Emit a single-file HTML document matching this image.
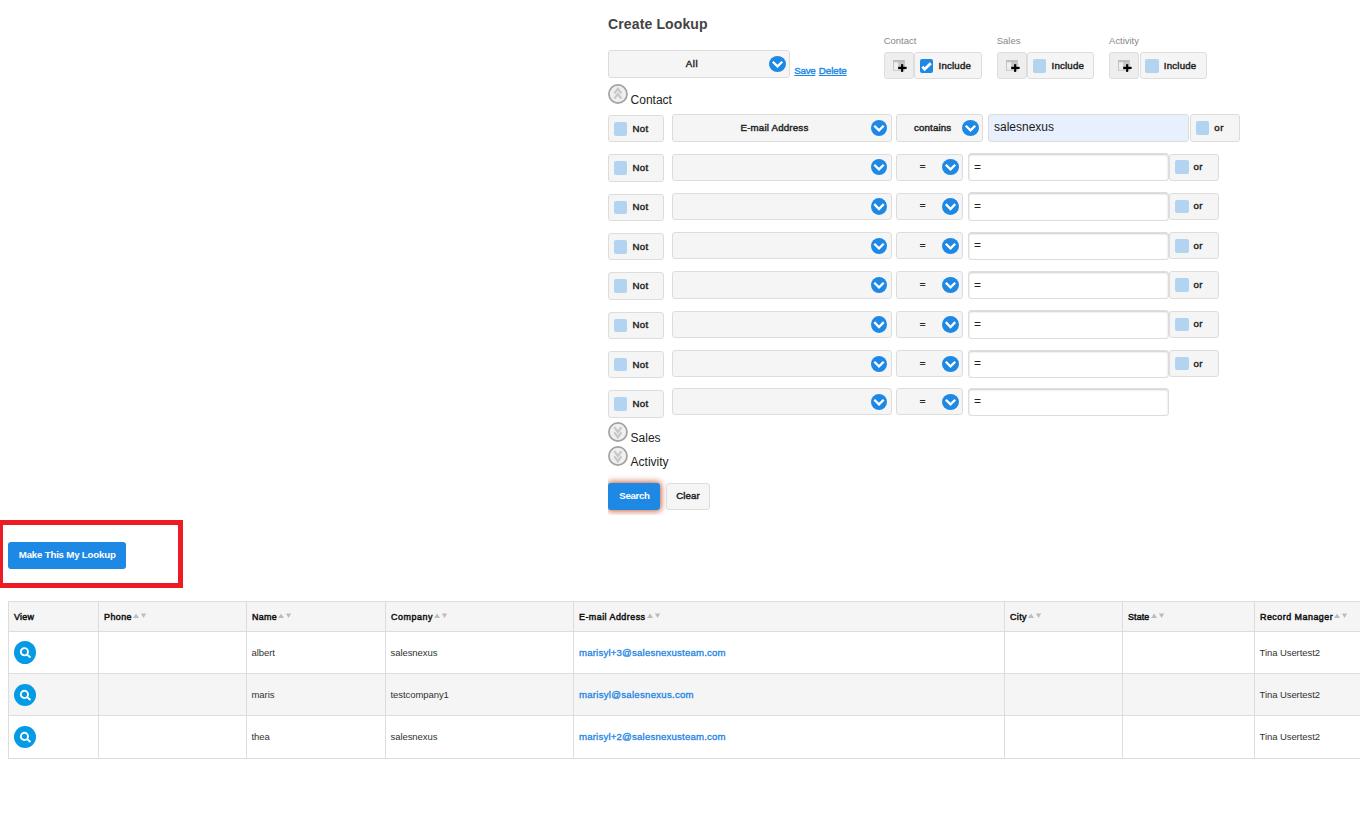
<!DOCTYPE html>
<html><head><meta charset="utf-8"><title>Create Lookup</title>
<style>
html,body{margin:0;padding:0;background:#fff;}
body{width:1360px;height:819px;position:relative;overflow:hidden;font-family:"Liberation Sans",sans-serif;color:#222;}
.a{position:absolute;box-sizing:border-box;white-space:nowrap;}
.box{background:#f5f5f5;border:1px solid #ddd;border-radius:3px;}
.t{position:absolute;white-space:nowrap;line-height:12px;font-size:9.7px;}
.b{font-weight:normal;color:#222;-webkit-text-stroke:.42px #222;}
.arr{position:absolute;border-radius:50%;background:#1e88e5;}
.arr svg{position:absolute;left:0;top:0;display:block;}
.cb{position:absolute;border-radius:2px;background:#b3d4f1;}
.cb.on{background:#1e88e5;}
.inp{background:#fff;border:1px solid #ddd;border-radius:3px;box-shadow:inset 0 1px 2px rgba(0,0,0,.2);}
.circ svg{position:absolute;left:0;top:0;display:block;}
.sec{font-size:12px;color:#222;line-height:14px;}
.glab{font-size:9.5px;color:#888;}
.lnk{font-size:9.8px;color:#1e88e5;text-decoration:underline;-webkit-text-stroke:.4px #1e88e5;}
.btnb{background:#1e88e5;border-radius:3px;}
.w{color:#fff;font-weight:bold;}
.th{font-weight:normal;color:#111;-webkit-text-stroke:.5px #111;}
.td{font-size:9.5px;color:#333;letter-spacing:-.07px;}
.em{font-size:9.6px;color:#2083e3;letter-spacing:.2px;-webkit-text-stroke:.3px #2083e3;}
.ln{position:absolute;background:#ddd;}
.vi{border-radius:50%;background:#039be5;}
.vi svg{position:absolute;left:0;top:0;display:block;}
</style></head><body>
<div class="a" style="left:608px;top:15px;font-size:14px;font-weight:bold;color:#444;line-height:18px;letter-spacing:.13px;">Create Lookup</div>
<div class="a box" style="left:608px;top:50px;width:182px;height:28px;"><span class="t b" style="top:6.64px;left:-17.05px;width:200px;text-align:center;letter-spacing:0.6px;">All</span><div class="arr" style="left:160px;top:5px;width:17px;height:16px;"><svg width="17" height="16" viewBox="0 0 17 16"><path d="M3.80 5.76 L8.50 10.34 L13.20 5.76" fill="none" stroke="#fff" stroke-width="2.3"/></svg></div></div>
<span class="t lnk" style="top:65.40px;left:794.30px;letter-spacing:-0.32px;font-size:9.8px;">Save</span><span class="t lnk" style="top:65.40px;left:818.80px;letter-spacing:-0.08px;font-size:9.8px;">Delete</span>
<span class="t glab" style="top:34.61px;left:883.80px;letter-spacing:-0.04px;font-size:9.5px;">Contact</span>
<div class="a box" style="left:884px;top:52px;width:30.2px;height:27px;background:#eee;"><svg width="16" height="14" viewBox="0 0 16 14" style="position:absolute;left:8px;top:7px"><rect x="0.5" y="0.5" width="10.8" height="9.8" fill="#efefef" stroke="#c6c6c6"/><rect x="5.2" y="2" width="6.6" height="8.3" fill="#c6c6c6"/><rect x="0" y="0" width="11.8" height="2.2" fill="#bdbdbd"/><rect x="5.15" y="6.8" width="8.45" height="2.2" fill="#000"/><rect x="8.1" y="4.2" width="2.1" height="7.7" fill="#000"/></svg></div>
<div class="a box" style="left:914.2px;top:52px;width:67.6px;height:27px;"><div class="cb on" style="left:4.8px;top:6px;width:13px;height:14px;"><svg width="13" height="14" viewBox="0 0 13 14" style="position:absolute;left:0;top:0"><path d="M2.4 7.7 L4.6 10.3 L10.8 4.2" fill="none" stroke="#fff" stroke-width="2.7"/></svg></div><span class="t b" style="top:7.04px;left:23.30px;letter-spacing:0.2px;">Include</span></div>
<span class="t glab" style="top:34.61px;left:996.80px;letter-spacing:-0.04px;font-size:9.5px;">Sales</span>
<div class="a box" style="left:997px;top:52px;width:30.2px;height:27px;background:#eee;"><svg width="16" height="14" viewBox="0 0 16 14" style="position:absolute;left:8px;top:7px"><rect x="0.5" y="0.5" width="10.8" height="9.8" fill="#efefef" stroke="#c6c6c6"/><rect x="5.2" y="2" width="6.6" height="8.3" fill="#c6c6c6"/><rect x="0" y="0" width="11.8" height="2.2" fill="#bdbdbd"/><rect x="5.15" y="6.8" width="8.45" height="2.2" fill="#000"/><rect x="8.1" y="4.2" width="2.1" height="7.7" fill="#000"/></svg></div>
<div class="a box" style="left:1027.2px;top:52px;width:66.4px;height:27px;"><div class="cb" style="left:4.8px;top:6px;width:13px;height:14px;"></div><span class="t b" style="top:7.04px;left:23.30px;letter-spacing:0.2px;">Include</span></div>
<span class="t glab" style="top:34.61px;left:1109.10px;letter-spacing:-0.04px;font-size:9.5px;">Activity</span>
<div class="a box" style="left:1109.3px;top:52px;width:30.2px;height:27px;background:#eee;"><svg width="16" height="14" viewBox="0 0 16 14" style="position:absolute;left:8px;top:7px"><rect x="0.5" y="0.5" width="10.8" height="9.8" fill="#efefef" stroke="#c6c6c6"/><rect x="5.2" y="2" width="6.6" height="8.3" fill="#c6c6c6"/><rect x="0" y="0" width="11.8" height="2.2" fill="#bdbdbd"/><rect x="5.15" y="6.8" width="8.45" height="2.2" fill="#000"/><rect x="8.1" y="4.2" width="2.1" height="7.7" fill="#000"/></svg></div>
<div class="a box" style="left:1139.5px;top:52px;width:67.3px;height:27px;"><div class="cb" style="left:4.8px;top:6px;width:13.4px;height:14px;"></div><span class="t b" style="top:7.04px;left:23.30px;letter-spacing:0.2px;">Include</span></div>
<div class="a circ" style="left:608px;top:84px;width:20px;height:20px;"><svg width="20" height="20" viewBox="0 0 20 20"><circle cx="9.95" cy="10" r="9.05" fill="#efefef" stroke="#a2a2a2" stroke-width="1.7"/><path d="M6.4 9.3 L9.9 4.8 L13.4 9.3 M6.4 14.7 L9.9 10 L13.4 14.7" fill="none" stroke="#c6c6c6" stroke-width="2.1"/></svg></div>
<span class="t sec" style="top:92.64px;left:630.60px;font-size:12px;line-height:14px;">Contact</span>
<div class="a box" style="left:608px;top:115px;width:56px;height:27px;"><div class="cb" style="left:5px;top:6px;width:13px;height:14px;"></div><span class="t b" style="top:6.64px;left:23.60px;letter-spacing:0.2px;">Not</span></div>
<div class="a box" style="left:672px;top:114px;width:220px;height:28px;"><span class="t b" style="top:6.64px;left:1.50px;width:200px;text-align:center;letter-spacing:0.2px;">E-mail Address</span><div class="arr" style="left:198px;top:5px;width:16px;height:16px;"><svg width="16" height="16" viewBox="0 0 16 16"><path d="M3.30 5.76 L8.00 10.34 L12.70 5.76" fill="none" stroke="#fff" stroke-width="2.3"/></svg></div></div>
<div class="a box" style="left:896px;top:114px;width:87px;height:28px;"><span class="t b" style="top:6.64px;left:-64.35px;width:200px;text-align:center;letter-spacing:0.15px;">contains</span><div class="arr" style="left:65px;top:5px;width:17px;height:16px;"><svg width="17" height="16" viewBox="0 0 17 16"><path d="M3.80 5.76 L8.50 10.34 L13.20 5.76" fill="none" stroke="#fff" stroke-width="2.3"/></svg></div></div>
<div class="a inp" style="left:988px;top:114px;width:201.2px;height:28px;background:#e8f0fe;box-shadow:none;"><span class="t " style="top:4.84px;left:5.00px;font-size:12px;line-height:14px;color:#1a1a1a;">salesnexus</span></div>
<div class="a box" style="left:1190px;top:114px;width:50px;height:28px;"><div class="cb" style="left:5px;top:6px;width:13px;height:14px;"></div><span class="t b" style="top:6.64px;left:23.20px;letter-spacing:0.55px;">or</span></div>
<div class="a box" style="left:608px;top:154px;width:56px;height:28px;"><div class="cb" style="left:5px;top:6px;width:13px;height:14px;"></div><span class="t b" style="top:6.64px;left:23.60px;letter-spacing:0.2px;">Not</span></div>
<div class="a box" style="left:672px;top:154px;width:220px;height:27px;"><div class="arr" style="left:198px;top:4px;width:16px;height:16px;"><svg width="16" height="16" viewBox="0 0 16 16"><path d="M3.30 5.76 L8.00 10.34 L12.70 5.76" fill="none" stroke="#fff" stroke-width="2.3"/></svg></div></div>
<div class="a box" style="left:896px;top:154px;width:67px;height:27px;"><span class="t b" style="top:5.24px;left:-74.50px;width:200px;text-align:center;">=</span><div class="arr" style="left:45px;top:4px;width:17px;height:16px;"><svg width="17" height="16" viewBox="0 0 17 16"><path d="M3.80 5.76 L8.50 10.34 L13.20 5.76" fill="none" stroke="#fff" stroke-width="2.3"/></svg></div></div>
<div class="a inp" style="left:968px;top:153px;width:201px;height:28px;"><span class="t " style="top:6.24px;left:5.00px;font-size:12px;line-height:14px;color:#222;">=</span></div>
<div class="a box" style="left:1169px;top:154px;width:50px;height:27px;"><div class="cb" style="left:5px;top:5px;width:14px;height:14px;"></div><span class="t b" style="top:5.64px;left:23.40px;letter-spacing:0.55px;">or</span></div>
<div class="a box" style="left:608px;top:194px;width:56px;height:27px;"><div class="cb" style="left:5px;top:6px;width:13px;height:13px;"></div><span class="t b" style="top:6.14px;left:23.60px;letter-spacing:0.2px;">Not</span></div>
<div class="a box" style="left:672px;top:193px;width:220px;height:27px;"><div class="arr" style="left:198px;top:4px;width:16px;height:17px;"><svg width="16" height="17" viewBox="0 0 16 17"><path d="M3.30 6.12 L8.00 10.99 L12.70 6.12" fill="none" stroke="#fff" stroke-width="2.3"/></svg></div></div>
<div class="a box" style="left:896px;top:193px;width:67px;height:27px;"><span class="t b" style="top:4.94px;left:-74.50px;width:200px;text-align:center;">=</span><div class="arr" style="left:45px;top:4px;width:17px;height:17px;"><svg width="17" height="17" viewBox="0 0 17 17"><path d="M3.80 6.12 L8.50 10.99 L13.20 6.12" fill="none" stroke="#fff" stroke-width="2.3"/></svg></div></div>
<div class="a inp" style="left:968px;top:192px;width:201px;height:29px;"><span class="t " style="top:5.74px;left:5.00px;font-size:12px;line-height:14px;color:#222;">=</span></div>
<div class="a box" style="left:1169px;top:193px;width:50px;height:27px;"><div class="cb" style="left:5px;top:6px;width:14px;height:13px;"></div><span class="t b" style="top:6.14px;left:23.40px;letter-spacing:0.55px;">or</span></div>
<div class="a box" style="left:608px;top:233px;width:56px;height:27px;"><div class="cb" style="left:5px;top:6px;width:13px;height:14px;"></div><span class="t b" style="top:6.64px;left:23.60px;letter-spacing:0.2px;">Not</span></div>
<div class="a box" style="left:672px;top:232px;width:220px;height:27px;"><div class="arr" style="left:198px;top:5px;width:16px;height:16px;"><svg width="16" height="16" viewBox="0 0 16 16"><path d="M3.30 5.76 L8.00 10.34 L12.70 5.76" fill="none" stroke="#fff" stroke-width="2.3"/></svg></div></div>
<div class="a box" style="left:896px;top:232px;width:67px;height:27px;"><span class="t b" style="top:6.24px;left:-74.50px;width:200px;text-align:center;">=</span><div class="arr" style="left:45px;top:5px;width:17px;height:16px;"><svg width="17" height="16" viewBox="0 0 17 16"><path d="M3.80 5.76 L8.50 10.34 L13.20 5.76" fill="none" stroke="#fff" stroke-width="2.3"/></svg></div></div>
<div class="a inp" style="left:968px;top:232px;width:201px;height:28px;"><span class="t " style="top:5.24px;left:5.00px;font-size:12px;line-height:14px;color:#222;">=</span></div>
<div class="a box" style="left:1169px;top:232px;width:50px;height:27px;"><div class="cb" style="left:5px;top:6px;width:14px;height:14px;"></div><span class="t b" style="top:6.64px;left:23.40px;letter-spacing:0.55px;">or</span></div>
<div class="a box" style="left:608px;top:272px;width:56px;height:28px;"><div class="cb" style="left:5px;top:6px;width:13px;height:14px;"></div><span class="t b" style="top:6.64px;left:23.60px;letter-spacing:0.2px;">Not</span></div>
<div class="a box" style="left:672px;top:271px;width:220px;height:28px;"><div class="arr" style="left:198px;top:5px;width:16px;height:16px;"><svg width="16" height="16" viewBox="0 0 16 16"><path d="M3.30 5.76 L8.00 10.34 L12.70 5.76" fill="none" stroke="#fff" stroke-width="2.3"/></svg></div></div>
<div class="a box" style="left:896px;top:271px;width:67px;height:28px;"><span class="t b" style="top:6.24px;left:-74.50px;width:200px;text-align:center;">=</span><div class="arr" style="left:45px;top:5px;width:17px;height:16px;"><svg width="17" height="16" viewBox="0 0 17 16"><path d="M3.80 5.76 L8.50 10.34 L13.20 5.76" fill="none" stroke="#fff" stroke-width="2.3"/></svg></div></div>
<div class="a inp" style="left:968px;top:271px;width:201px;height:28px;"><span class="t " style="top:6.24px;left:5.00px;font-size:12px;line-height:14px;color:#222;">=</span></div>
<div class="a box" style="left:1169px;top:271px;width:50px;height:28px;"><div class="cb" style="left:5px;top:6px;width:14px;height:14px;"></div><span class="t b" style="top:6.64px;left:23.40px;letter-spacing:0.55px;">or</span></div>
<div class="a box" style="left:608px;top:312px;width:56px;height:27px;"><div class="cb" style="left:5px;top:6px;width:13px;height:13px;"></div><span class="t b" style="top:6.14px;left:23.60px;letter-spacing:0.2px;">Not</span></div>
<div class="a box" style="left:672px;top:311px;width:220px;height:27px;"><div class="arr" style="left:198px;top:4px;width:16px;height:17px;"><svg width="16" height="17" viewBox="0 0 16 17"><path d="M3.30 6.12 L8.00 10.99 L12.70 6.12" fill="none" stroke="#fff" stroke-width="2.3"/></svg></div></div>
<div class="a box" style="left:896px;top:311px;width:67px;height:27px;"><span class="t b" style="top:5.74px;left:-74.50px;width:200px;text-align:center;">=</span><div class="arr" style="left:45px;top:4px;width:17px;height:17px;"><svg width="17" height="17" viewBox="0 0 17 17"><path d="M3.80 6.12 L8.50 10.99 L13.20 6.12" fill="none" stroke="#fff" stroke-width="2.3"/></svg></div></div>
<div class="a inp" style="left:968px;top:310px;width:201px;height:29px;"><span class="t " style="top:5.74px;left:5.00px;font-size:12px;line-height:14px;color:#222;">=</span></div>
<div class="a box" style="left:1169px;top:311px;width:50px;height:27px;"><div class="cb" style="left:5px;top:6px;width:14px;height:13px;"></div><span class="t b" style="top:6.14px;left:23.40px;letter-spacing:0.55px;">or</span></div>
<div class="a box" style="left:608px;top:351px;width:56px;height:27px;"><div class="cb" style="left:5px;top:6px;width:13px;height:13px;"></div><span class="t b" style="top:7.14px;left:23.60px;letter-spacing:0.2px;">Not</span></div>
<div class="a box" style="left:672px;top:350px;width:220px;height:27px;"><div class="arr" style="left:198px;top:5px;width:16px;height:16px;"><svg width="16" height="16" viewBox="0 0 16 16"><path d="M3.30 5.76 L8.00 10.34 L12.70 5.76" fill="none" stroke="#fff" stroke-width="2.3"/></svg></div></div>
<div class="a box" style="left:896px;top:350px;width:67px;height:27px;"><span class="t b" style="top:6.24px;left:-74.50px;width:200px;text-align:center;">=</span><div class="arr" style="left:45px;top:5px;width:17px;height:16px;"><svg width="17" height="16" viewBox="0 0 17 16"><path d="M3.80 5.76 L8.50 10.34 L13.20 5.76" fill="none" stroke="#fff" stroke-width="2.3"/></svg></div></div>
<div class="a inp" style="left:968px;top:350px;width:201px;height:28px;"><span class="t " style="top:5.24px;left:5.00px;font-size:12px;line-height:14px;color:#222;">=</span></div>
<div class="a box" style="left:1169px;top:350px;width:50px;height:27px;"><div class="cb" style="left:5px;top:6px;width:14px;height:13px;"></div><span class="t b" style="top:6.64px;left:23.40px;letter-spacing:0.55px;">or</span></div>
<div class="a box" style="left:608px;top:390px;width:56px;height:28px;"><div class="cb" style="left:5px;top:6px;width:13px;height:14px;"></div><span class="t b" style="top:6.64px;left:23.60px;letter-spacing:0.2px;">Not</span></div>
<div class="a box" style="left:672px;top:388px;width:220px;height:27px;"><div class="arr" style="left:198px;top:5px;width:16px;height:16px;"><svg width="16" height="16" viewBox="0 0 16 16"><path d="M3.30 5.76 L8.00 10.34 L12.70 5.76" fill="none" stroke="#fff" stroke-width="2.3"/></svg></div></div>
<div class="a box" style="left:896px;top:388px;width:67px;height:27px;"><span class="t b" style="top:6.24px;left:-74.50px;width:200px;text-align:center;">=</span><div class="arr" style="left:45px;top:5px;width:17px;height:16px;"><svg width="17" height="16" viewBox="0 0 17 16"><path d="M3.80 5.76 L8.50 10.34 L13.20 5.76" fill="none" stroke="#fff" stroke-width="2.3"/></svg></div></div>
<div class="a inp" style="left:968px;top:388px;width:201px;height:28px;"><span class="t " style="top:5.24px;left:5.00px;font-size:12px;line-height:14px;color:#222;">=</span></div>
<div class="a circ" style="left:608px;top:422px;width:20px;height:20px;"><svg width="20" height="20" viewBox="0 0 20 20"><circle cx="9.95" cy="10" r="9.05" fill="#efefef" stroke="#a2a2a2" stroke-width="1.7"/><path d="M6.4 5.2 L9.9 10.1 L13.4 5.2 M6.4 10.4 L9.9 15.4 L13.4 10.4" fill="none" stroke="#c6c6c6" stroke-width="2.1"/></svg></div>
<span class="t sec" style="top:430.59px;left:630.60px;font-size:12px;line-height:14px;">Sales</span>
<div class="a circ" style="left:608px;top:446px;width:20px;height:20px;"><svg width="20" height="20" viewBox="0 0 20 20"><circle cx="9.95" cy="10" r="9.05" fill="#efefef" stroke="#a2a2a2" stroke-width="1.7"/><path d="M6.4 5.2 L9.9 10.1 L13.4 5.2 M6.4 10.4 L9.9 15.4 L13.4 10.4" fill="none" stroke="#c6c6c6" stroke-width="2.1"/></svg></div>
<span class="t sec" style="top:455.14px;left:630.60px;font-size:12px;line-height:14px;">Activity</span>
<div class="a" style="left:608px;top:470px;width:70px;height:45px;overflow:hidden;"><div class="a btnb" style="left:0;top:13px;width:52px;height:27px;box-shadow:0 0 6px 1px rgba(196,78,40,.95);"><span class="t w" style="top:6.64px;left:-73.60px;width:200px;text-align:center;letter-spacing:-0.35px;">Search</span></div></div>
<div class="a box" style="left:666px;top:483px;width:44px;height:27px;"><span class="t b" style="top:5.64px;left:-79.00px;width:200px;text-align:center;letter-spacing:0.1px;">Clear</span></div>
<div class="a" style="left:-2px;top:520px;width:185px;height:68px;border:5px solid #ed1c24;"></div>
<div class="a btnb" style="left:8px;top:542px;width:118px;height:27px;"><span class="t w" style="top:6.64px;left:-40.80px;width:200px;text-align:center;letter-spacing:-0.2px;">Make This My Lookup</span></div>
<div class="a" style="left:8px;top:601px;width:1352px;height:30px;background:#f5f5f5;"></div>
<div class="a" style="left:8px;top:673px;width:1352px;height:42px;background:#f5f5f5;"></div>
<div class="ln" style="left:8px;top:601px;width:1352px;height:1px;"></div>
<div class="ln" style="left:8px;top:631px;width:1352px;height:1px;"></div>
<div class="ln" style="left:8px;top:673px;width:1352px;height:1px;"></div>
<div class="ln" style="left:8px;top:715px;width:1352px;height:1px;"></div>
<div class="ln" style="left:8px;top:758px;width:1352px;height:1px;"></div>
<div class="ln" style="left:8px;top:601px;width:1px;height:158px;"></div>
<div class="ln" style="left:98px;top:601px;width:1px;height:158px;"></div>
<div class="ln" style="left:246px;top:601px;width:1px;height:158px;"></div>
<div class="ln" style="left:385px;top:601px;width:1px;height:158px;"></div>
<div class="ln" style="left:573px;top:601px;width:1px;height:158px;"></div>
<div class="ln" style="left:1004px;top:601px;width:1px;height:158px;"></div>
<div class="ln" style="left:1122px;top:601px;width:1px;height:158px;"></div>
<div class="ln" style="left:1254px;top:601px;width:1px;height:158px;"></div>
<span class="t th" style="top:611.14px;left:13.70px;"><span style="display:inline-block;width:20.4px;height:12px;vertical-align:top;"><span style="display:inline-block;transform:scaleX(.92);transform-origin:0 50%;letter-spacing:0.29px;">View</span></span></span>
<span class="t th" style="top:611.14px;left:103.70px;"><span style="display:inline-block;width:28.0px;height:12px;vertical-align:top;"><span style="display:inline-block;transform:scaleX(.92);transform-origin:0 50%;letter-spacing:0.48px;">Phone</span></span><svg width="14" height="6" viewBox="0 0 14 6" style="display:inline-block;vertical-align:top;margin-top:1.7px;margin-left:1.4px"><path d="M0 5 L3.05 0.5 L6.1 5 Z M7.9 0.6 L13.2 0.6 L10.55 5 Z" fill="#bdbdbd"/></svg></span>
<span class="t th" style="top:611.14px;left:251.70px;"><span style="display:inline-block;width:25.1px;height:12px;vertical-align:top;"><span style="display:inline-block;transform:scaleX(.92);transform-origin:0 50%;letter-spacing:0.35px;">Name</span></span><svg width="14" height="6" viewBox="0 0 14 6" style="display:inline-block;vertical-align:top;margin-top:1.7px;margin-left:1.4px"><path d="M0 5 L3.05 0.5 L6.1 5 Z M7.9 0.6 L13.2 0.6 L10.55 5 Z" fill="#bdbdbd"/></svg></span>
<span class="t th" style="top:611.14px;left:390.70px;"><span style="display:inline-block;width:42.2px;height:12px;vertical-align:top;"><span style="display:inline-block;transform:scaleX(.92);transform-origin:0 50%;letter-spacing:0.62px;">Company</span></span><svg width="14" height="6" viewBox="0 0 14 6" style="display:inline-block;vertical-align:top;margin-top:1.7px;margin-left:1.4px"><path d="M0 5 L3.05 0.5 L6.1 5 Z M7.9 0.6 L13.2 0.6 L10.55 5 Z" fill="#bdbdbd"/></svg></span>
<span class="t th" style="top:611.14px;left:578.70px;"><span style="display:inline-block;width:67.05px;height:12px;vertical-align:top;"><span style="display:inline-block;transform:scaleX(.92);transform-origin:0 50%;letter-spacing:0.51px;">E-mail Address</span></span><svg width="14" height="6" viewBox="0 0 14 6" style="display:inline-block;vertical-align:top;margin-top:1.7px;margin-left:1.4px"><path d="M0 5 L3.05 0.5 L6.1 5 Z M7.9 0.6 L13.2 0.6 L10.55 5 Z" fill="#bdbdbd"/></svg></span>
<span class="t th" style="top:611.14px;left:1009.70px;"><span style="display:inline-block;width:17.0px;height:12px;vertical-align:top;"><span style="display:inline-block;transform:scaleX(.92);transform-origin:0 50%;letter-spacing:0.44px;">City</span></span><svg width="14" height="6" viewBox="0 0 14 6" style="display:inline-block;vertical-align:top;margin-top:1.7px;margin-left:1.4px"><path d="M0 5 L3.05 0.5 L6.1 5 Z M7.9 0.6 L13.2 0.6 L10.55 5 Z" fill="#bdbdbd"/></svg></span>
<span class="t th" style="top:611.14px;left:1127.70px;"><span style="display:inline-block;width:21.5px;height:12px;vertical-align:top;"><span style="display:inline-block;transform:scaleX(.92);transform-origin:0 50%;letter-spacing:0.14px;">State</span></span><svg width="14" height="6" viewBox="0 0 14 6" style="display:inline-block;vertical-align:top;margin-top:1.7px;margin-left:1.4px"><path d="M0 5 L3.05 0.5 L6.1 5 Z M7.9 0.6 L13.2 0.6 L10.55 5 Z" fill="#bdbdbd"/></svg></span>
<span class="t th" style="top:611.14px;left:1259.70px;"><span style="display:inline-block;width:73.3px;height:12px;vertical-align:top;"><span style="display:inline-block;transform:scaleX(.92);transform-origin:0 50%;letter-spacing:0.53px;">Record Manager</span></span><svg width="14" height="6" viewBox="0 0 14 6" style="display:inline-block;vertical-align:top;margin-top:1.7px;margin-left:1.4px"><path d="M0 5 L3.05 0.5 L6.1 5 Z M7.9 0.6 L13.2 0.6 L10.55 5 Z" fill="#bdbdbd"/></svg></span>
<div class="a vi" style="left:14px;top:641px;width:22px;height:23px;"><svg width="22" height="23" viewBox="0 0 22 23"><g transform="translate(0,0.35)"><circle cx="10.4" cy="10.4" r="3.6" fill="none" stroke="#fff" stroke-width="1.9"/><path d="M12.9 13.1 L16.5 16.1" stroke="#fff" stroke-width="1.9"/></g></svg></div>
<span class="t td" style="top:646.71px;left:251.50px;font-size:9.5px;">albert</span><span class="t td" style="top:646.71px;left:390.50px;font-size:9.5px;">salesnexus</span><span class="t em" style="top:646.67px;left:579.00px;font-size:9.6px;">marisyl+3@salesnexusteam.com</span><span class="t td" style="top:646.71px;left:1259.50px;font-size:9.5px;">Tina Usertest2</span>
<div class="a vi" style="left:14px;top:684px;width:22px;height:22px;"><svg width="22" height="22" viewBox="0 0 22 22"><g transform="translate(0,0.00)"><circle cx="10.4" cy="10.4" r="3.6" fill="none" stroke="#fff" stroke-width="1.9"/><path d="M12.9 13.1 L16.5 16.1" stroke="#fff" stroke-width="1.9"/></g></svg></div>
<span class="t td" style="top:688.71px;left:251.50px;font-size:9.5px;">maris</span><span class="t td" style="top:688.71px;left:390.50px;font-size:9.5px;">testcompany1</span><span class="t em" style="top:688.67px;left:579.00px;letter-spacing:0.27px;font-size:9.6px;">marisyl@salesnexus.com</span><span class="t td" style="top:688.71px;left:1259.50px;font-size:9.5px;">Tina Usertest2</span>
<div class="a vi" style="left:14px;top:726px;width:22px;height:22px;"><svg width="22" height="22" viewBox="0 0 22 22"><g transform="translate(0,0.00)"><circle cx="10.4" cy="10.4" r="3.6" fill="none" stroke="#fff" stroke-width="1.9"/><path d="M12.9 13.1 L16.5 16.1" stroke="#fff" stroke-width="1.9"/></g></svg></div>
<span class="t td" style="top:730.71px;left:251.50px;font-size:9.5px;">thea</span><span class="t td" style="top:730.71px;left:390.50px;font-size:9.5px;">salesnexus</span><span class="t em" style="top:730.67px;left:579.00px;font-size:9.6px;">marisyl+2@salesnexusteam.com</span><span class="t td" style="top:730.71px;left:1259.50px;font-size:9.5px;">Tina Usertest2</span>
</body></html>
